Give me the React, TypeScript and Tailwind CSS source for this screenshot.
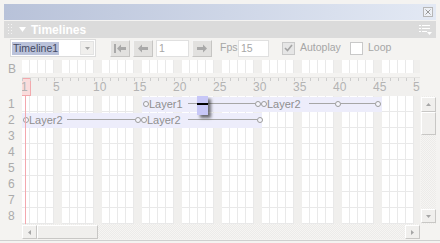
import { memo } from 'react'

const FRAMES = Array.from({ length: 50 }, (_, i) => i + 1)
const ROWS = [1, 2, 3, 4, 5, 6, 7, 8]

function Btn({ dir }: { dir: 'first' | 'prev' | 'next' }) {
  return (
    <div className="w-[20px] h-[17px] bg-[#e2e1df] border border-t-[#f4f4f4] border-l-[#f4f4f4] border-b-[#c6c5c3] border-r-[#c6c5c3] flex items-center justify-center">
      <svg width="12" height="9" viewBox="0 0 12 9" className="text-[#a9a9a9]" fill="currentColor">
        {dir === 'first' && (
          <>
            <rect x="0" y="0" width="2" height="9" />
            <path d="M3 4.5 L7 0.5 L7 3 L12 3 L12 6 L7 6 L7 8.5 Z" />
          </>
        )}
        {dir === 'prev' && <path d="M1 4.5 L5 0.5 L5 3 L11 3 L11 6 L5 6 L5 8.5 Z" />}
        {dir === 'next' && <path d="M11 4.5 L7 0.5 L7 3 L1 3 L1 6 L7 6 L7 8.5 Z" />}
      </svg>
    </div>
  )
}

function Circle({ x }: { x: number }) {
  return (
    <div
      className="absolute top-[5px] w-[6px] h-[6px] rounded-full border border-[#9c9c9c] bg-[#f6f6fd]"
      style={{ left: x }}
    />
  )
}

function Line({ x, w }: { x: number; w: number }) {
  return <div className="absolute top-[7px] h-px bg-[#a6a6a6]" style={{ left: x, width: w }} />
}

function Label({ x, text }: { x: number; text: string }) {
  return (
    <div className="absolute top-0 leading-[16px] text-[11px] text-[#8f8f8f] whitespace-nowrap" style={{ left: x }}>
      {text}
    </div>
  )
}

function FrameRow({ h, lines = true }: { h: string; lines?: boolean }) {
  return (
    <div className={`flex ${h}`}>
      {FRAMES.map((n) =>
        n % 5 === 0 ? (
          <div key={n} className="w-[8px] h-full shrink-0 bg-[#f0efed]" />
        ) : (
          <div
            key={n}
            className={`w-[8px] h-full shrink-0 bg-white border-r border-[#e9e9e9] ${lines ? 'border-b' : ''}`}
          />
        )
      )}
    </div>
  )
}

function Timelines() {
  return (
    <div className="w-[440px] h-[243px] bg-[#f4f3f1] font-['Liberation_Sans',Arial,sans-serif] overflow-hidden">
      <div className="pt-[4px] px-[4px] h-[241px] border-b border-[#cfcfcf] flex flex-col">
        {/* title bar */}
        <div className="h-[16px] bg-gradient-to-r from-[#b8c2d9] to-[#e3e9f4] flex items-center justify-end pr-[3px]">
          <div className="w-[10px] h-[10px] border border-[#b6b6b6] bg-[#eef1f6] flex items-center justify-center">
            <svg width="6" height="6" viewBox="0 0 6 6" stroke="#9a9a9a" strokeWidth="1">
              <path d="M0.5 0.5 L5.5 5.5 M5.5 0.5 L0.5 5.5" />
            </svg>
          </div>
        </div>

        {/* panel header */}
        <div className="mt-[1px] h-[17px] bg-[#dbdbdb] flex items-center">
          <div className="ml-[3px] w-[5px] h-[13px] bg-[radial-gradient(circle,#f4f4f4_1px,transparent_1px)] bg-[length:3px_3px]" />
          <svg width="7" height="5" viewBox="0 0 7 5" className="ml-[7px]" fill="#ffffff">
            <path d="M0 0 L7 0 L3.5 5 Z" />
          </svg>
          <span className="ml-[5px] text-[12px] font-bold text-white leading-none">Timelines</span>
          <div className="ml-auto mr-[4px]">
            <svg width="13" height="10" viewBox="0 0 13 10" fill="#ffffff">
              <rect x="0" y="0" width="2" height="1" />
              <rect x="3" y="0" width="8" height="1" />
              <rect x="0" y="3" width="2" height="1" />
              <rect x="3" y="3" width="8" height="1" />
              <rect x="0" y="6" width="2" height="1" />
              <rect x="3" y="6" width="5" height="1" />
              <path d="M8 7 L13 7 L10.5 10 Z" />
            </svg>
          </div>
        </div>

        {/* toolbar */}
        <div className="h-[20px] flex items-center pl-[6px] text-[10.5px] text-[#a6a6a6]">
          <div className="w-[86px] h-[18px] bg-white border border-[#dcdcdc] flex items-center pl-[1px] pr-[1px]">
            <span className="bg-[#bac2da] text-[#454a63] leading-[13px] px-px">Timeline1</span>
            <div className="ml-auto w-[14px] h-[14px] bg-[#f0efed] border border-[#e3e3e3] flex items-center justify-center">
              <svg width="5" height="3" viewBox="0 0 5 3" fill="#a6a6a6">
                <path d="M0 0 L5 0 L2.5 3 Z" />
              </svg>
            </div>
          </div>
          <div className="ml-[14px]">
            <Btn dir="first" />
          </div>
          <div className="ml-[3px]">
            <Btn dir="prev" />
          </div>
          <div className="ml-[3px] w-[33px] h-[17px] bg-white border border-[#e0e0e0] pl-[2px] leading-[15px]">1</div>
          <div className="ml-[3px]">
            <Btn dir="next" />
          </div>
          <span className="ml-[8px] w-[16px]">Fps</span>
          <div className="ml-[2px] w-[31px] h-[17px] bg-white border border-[#e0e0e0] pl-[2px] leading-[15px]">15</div>
          <div className="ml-[13px] w-[13px] h-[13px] bg-[#e6e6e6] border border-[#c9c9c9] flex items-center justify-center">
            <svg width="9" height="8" viewBox="0 0 9 8" fill="none" stroke="#a4a4a4" strokeWidth="1.6">
              <path d="M1 4 L3.5 6.5 L8 1" />
            </svg>
          </div>
          <span className="ml-[5px] w-[40px] whitespace-nowrap">Autoplay</span>
          <div className="ml-[10px] w-[13px] h-[13px] bg-white border border-[#c9c9c9]" />
          <span className="ml-[5px]">Loop</span>
        </div>

        {/* B row */}
        <div className="flex h-[19px]">
          <div className="w-[18px] pl-[4px] pt-[5px] text-[12px] leading-[12px] text-[#ababab]">B</div>
          <div className="w-[398px] overflow-hidden pt-[2px]">
            <FrameRow h="h-[13px]" lines={false} />
          </div>
        </div>

        {/* ruler */}
        <div className="flex h-[19px]">
          <div className="w-[18px]" />
          <div className="w-[398px] overflow-hidden relative bg-[#f1f0ee] border-t border-[#e4e3e1]">
            <div className="absolute left-[-1px] top-0 w-[10px] h-[18px] bg-[#f9dcdc] border border-[#f2a9ad]" />
            <div className="flex h-full relative">
              {FRAMES.map((n) => (
                <div key={n} className="relative w-[8px] h-full shrink-0">
                  <div className="absolute left-0 top-0 w-px h-[3px] bg-[#cdcdcd]" />
                  {(n === 1 || n % 5 === 0) && (
                    <span className="absolute left-[-1px] top-[2px] text-[12px] leading-[14px] text-[#b3b3b3] whitespace-nowrap">
                      {n}
                    </span>
                  )}
                </div>
              ))}
            </div>
          </div>
        </div>

        {/* layer rows */}
        <div className="flex h-[128px]">
          <div className="w-[18px] flex flex-col">
            {ROWS.map((r) => (
              <div key={r} className="h-[16px] pl-[4px] text-[12px] leading-[16px] text-[#ababab]">
                {r}
              </div>
            ))}
          </div>
          <div className="w-[398px] overflow-hidden relative">
            {ROWS.map((r) => (
              <FrameRow key={r} h="h-[16px]" />
            ))}

            {/* row 1 */}
            <div className="absolute left-[120px] top-[1px] w-[240px] h-[15px] bg-[#ededfb]" />
            <div className="absolute left-0 top-0 w-full h-[16px]">
              <Circle x={121} />
              <Label x={127} text="Layer1" />
              <Line x={166} w={67} />
              <Circle x={233} />
              <Circle x={239} />
              <Label x={245} text="Layer2" />
              <Line x={287} w={26} />
              <Circle x={313} />
              <Line x={319} w={34} />
              <Circle x={353} />
            </div>

            {/* row 2 */}
            <div className="absolute left-0 top-[17px] w-[240px] h-[15px] bg-[#ededfb]" />
            <div className="absolute left-0 top-[16px] w-full h-[16px]">
              <Circle x={1} />
              <Label x={7} text="Layer2" />
              <Line x={45} w={68} />
              <Circle x={113} />
              <Circle x={119} />
              <Label x={125} text="Layer2" />
              <Line x={166} w={69} />
              <Circle x={235} />
            </div>

            {/* playhead */}
            <div className="absolute left-[3px] top-0 w-px h-full bg-[#f3a8ae]" />

            {/* dragged frame */}
            <div className="absolute left-[175px] top-0 w-[11px] h-[19px] bg-[#c7c7f7] shadow-[3px_3px_3px_rgba(0,0,0,0.55)]">
              <div className="mt-[7px] h-[2px] bg-black" />
            </div>
          </div>

          {/* vertical scrollbar */}
          <div className="ml-[1px] w-[15px] flex flex-col bg-[repeating-conic-gradient(#ecebe9_0%_25%,#f6f5f3_0%_50%)] bg-[length:2px_2px]">
            <div className="mt-[1px] h-[15px] bg-[#f0efed] border border-t-white border-l-white border-b-[#c8c7c5] border-r-[#c8c7c5] flex items-center justify-center">
              <svg width="5" height="3" viewBox="0 0 5 3" fill="#a6a6a6">
                <path d="M0 3 L5 3 L2.5 0 Z" />
              </svg>
            </div>
            <div className="h-[23px] bg-[#f0efed] border border-t-white border-l-white border-b-[#c8c7c5] border-r-[#c8c7c5]" />
            <div className="flex-1" />
            <div className="mb-[1px] h-[14px] bg-[#f0efed] border border-t-white border-l-white border-b-[#c8c7c5] border-r-[#c8c7c5] flex items-center justify-center">
              <svg width="5" height="3" viewBox="0 0 5 3" fill="#a6a6a6">
                <path d="M0 0 L5 0 L2.5 3 Z" />
              </svg>
            </div>
          </div>
        </div>

        {/* horizontal scrollbar */}
        <div className="flex h-[15px]">
          <div className="w-[18px]" />
          <div className="w-[398px] flex pt-px bg-[repeating-conic-gradient(#ecebe9_0%_25%,#f6f5f3_0%_50%)] bg-[length:2px_2px]">
            <div className="w-[15px] h-[14px] bg-[#f0efed] border border-t-white border-l-white border-b-[#c8c7c5] border-r-[#c8c7c5] flex items-center justify-center">
              <svg width="3" height="5" viewBox="0 0 3 5" fill="#a6a6a6">
                <path d="M3 0 L3 5 L0 2.5 Z" />
              </svg>
            </div>
            <div className="w-[61px] h-[14px] bg-[#f0efed] border border-t-white border-l-white border-b-[#c8c7c5] border-r-[#c8c7c5]" />
            <div className="flex-1" />
            <div className="w-[15px] h-[14px] bg-[#f0efed] border border-t-white border-l-white border-b-[#c8c7c5] border-r-[#c8c7c5] flex items-center justify-center">
              <svg width="3" height="5" viewBox="0 0 3 5" fill="#a6a6a6">
                <path d="M0 0 L0 5 L3 2.5 Z" />
              </svg>
            </div>
          </div>
        </div>
      </div>
    </div>
  )
}

export default memo(Timelines)
